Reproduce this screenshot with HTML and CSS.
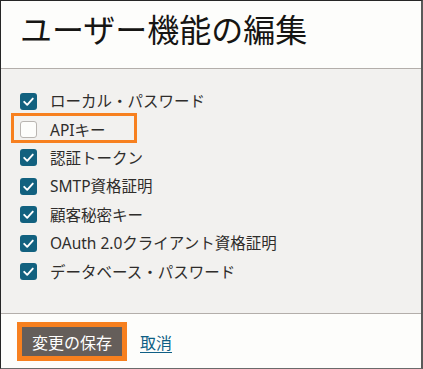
FILE: index.html
```html
<!DOCTYPE html>
<html lang="ja">
<head>
<meta charset="utf-8">
<link rel="stylesheet" href="styles.css">
</head>
<body>
<div class="dialog">
  <header class="head">
    <h1 class="title">ユーザー機能の編集</h1>
  </header>
  <section class="body">
    <ul class="list">
      <li class="row"><span class="cb on"><svg viewBox="0 0 17 17"><path d="M4.2 8.8l3 3 5.6-6.2" /></svg></span><span class="lbl">ローカル・パスワード</span></li>
      <li class="row hl"><span class="cb off"></span><span class="lbl">APIキー</span></li>
      <li class="row"><span class="cb on"><svg viewBox="0 0 17 17"><path d="M4.2 8.8l3 3 5.6-6.2" /></svg></span><span class="lbl">認証トークン</span></li>
      <li class="row"><span class="cb on"><svg viewBox="0 0 17 17"><path d="M4.2 8.8l3 3 5.6-6.2" /></svg></span><span class="lbl">SMTP資格証明</span></li>
      <li class="row"><span class="cb on"><svg viewBox="0 0 17 17"><path d="M4.2 8.8l3 3 5.6-6.2" /></svg></span><span class="lbl">顧客秘密キー</span></li>
      <li class="row"><span class="cb on"><svg viewBox="0 0 17 17"><path d="M4.2 8.8l3 3 5.6-6.2" /></svg></span><span class="lbl">OAuth 2.0クライアント資格証明</span></li>
      <li class="row"><span class="cb on"><svg viewBox="0 0 17 17"><path d="M4.2 8.8l3 3 5.6-6.2" /></svg></span><span class="lbl">データベース・パスワード</span></li>
    </ul>
  </section>
  <footer class="foot">
    <span class="btnwrap"><button class="btn">変更の保存</button></span>
    <a class="link" href="#">取消</a>
  </footer>
</div>
</body>
</html>
```
FILE: styles.css
```css
*, *::before, *::after { box-sizing: border-box; }
html, body { margin: 0; padding: 0; background: #fdfdfb; }
body {
  font-family: "Noto Sans", "Noto Sans CJK JP", sans-serif;
  color: #2e2e2e;
}
.dialog {
  width: 423px;
  height: 369px;
  border-top: 1px solid #262626;
  border-left: 1px solid #262626;
  border-right: 2px solid #5a5a5a;
  border-bottom: 1px solid #6a6a6a;
  display: flex;
  flex-direction: column;
  background: #fdfdfb;
}
.head {
  height: 68px;
  border-bottom: 1px solid #b3aeaa;
  padding-left: 19px;
}
.title {
  margin: 0;
  font-family: "Noto Sans CJK JP", sans-serif;
  font-weight: 400;
  font-size: 32px;
  line-height: 54px;
  color: #161513;
}
.body {
  height: 245px;
  background: #f2f1ef;
  border-bottom: 1px solid #b3aeaa;
  padding-top: 18px;
  padding-left: 19px;
}
.list { list-style: none; margin: 0; padding: 0; }
.row {
  height: 28.4px;
  display: flex;
  align-items: center;
  position: relative;
}
.row.hl::before {
  content: "";
  position: absolute;
  left: -9px;
  top: -2px;
  width: 126px;
  height: 30px;
  border: 3.5px solid #f7801f;
}
.cb {
  width: 17px;
  height: 17px;
  border-radius: 3px;
  flex: none;
  display: inline-flex;
}
.cb.on { background: #12617f; }
.cb.off { background: #fdfdfb; border: 1px solid #b9b5b1; }
.cb svg { width: 17px; height: 17px; }
.cb path { fill: none; stroke: #fff; stroke-width: 1.9; stroke-linecap: round; stroke-linejoin: round; }
.lbl {
  margin-left: 13px;
  font-size: 15.5px;
  line-height: 20px;
  color: #2f2d2b;
}
.foot {
  flex: 1;
  display: flex;
  align-items: center;
  padding-left: 16px;
  padding-top: 1px;
}
.btnwrap {
  display: inline-flex;
  border: 5px solid #f7801f;
}
.btn {
  font-family: "Noto Sans CJK JP", sans-serif;
  background: #655e5a;
  color: #fff;
  border: none;
  border-radius: 0;
  font-size: 16px;
  width: 100px;
  height: 29px;
  padding: 0;
}
.link {
  margin-left: 13px;
  color: #0f5f85;
  font-family: "Noto Sans CJK JP", sans-serif;
  font-size: 16px;
  text-decoration: underline;
  text-underline-offset: 3px;
}
```
